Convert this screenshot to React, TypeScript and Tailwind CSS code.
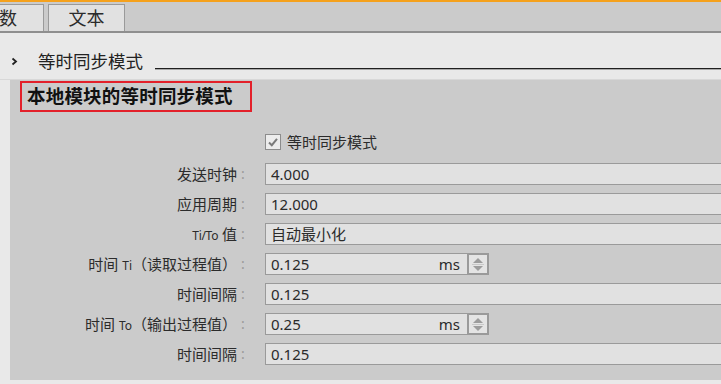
import React from "react";

type Row = { label: React.ReactNode; value: string; unit?: boolean };

const Lbl = ({ children }: { children: React.ReactNode }) => <>{children}</>;

const Spinner = () => (
  <div className="w-[22px] h-[22px] border-2 border-[#9a9a9a] bg-[#e4e4e4] flex flex-col items-center justify-center">
    <svg width="12" height="16" viewBox="0 0 12 16">
      <polygon points="6,2 11,7 1,7" fill="#9c9c9c" />
      <line x1="0" y1="8.5" x2="12" y2="8.5" stroke="#c8c8c8" strokeWidth="1" />
      <polygon points="1,10 11,10 6,15" fill="#9c9c9c" />
    </svg>
  </div>
);

export default function App() {
  const rows: Row[] = [
    { label: <Lbl>发送时钟</Lbl>, value: "4.000" },
    { label: <Lbl>应用周期</Lbl>, value: "12.000" },
    {
      label: (
        <>
          <span className="text-[12px] tracking-[-0.3px]">Ti/To</span> 值
        </>
      ),
      value: "自动最小化",
    },
    {
      label: (
        <>
          时间 <span className="text-[12px]">Ti</span>（读取过程值）
        </>
      ),
      value: "0.125",
      unit: true,
    },
    { label: <Lbl>时间间隔</Lbl>, value: "0.125" },
    {
      label: (
        <>
          时间 <span className="text-[12px]">To</span>（输出过程值）
        </>
      ),
      value: "0.25",
      unit: true,
    },
    { label: <Lbl>时间间隔</Lbl>, value: "0.125" },
  ];

  return (
    <div className="w-[721px] h-[384px] overflow-hidden bg-[#e9e9e9] text-[#2b2b2b] font-['Noto_Sans','Noto_Sans_CJK_SC',sans-serif]">
      <div className="h-[2px] bg-[#f5a11c]" />
      <div className="h-[31px] bg-[#cbcbcb] border-b-2 border-[#8f8f8f] flex items-end gap-[4px]">
        <div className="w-[44px] h-[27px] bg-[#e1e1e1] border border-b-0 border-[#9a9a9a] border-l-0 flex items-center justify-end pr-[26px] text-[18px] leading-none">
          数
        </div>
        <div className="w-[77px] h-[27px] bg-[#e1e1e1] border border-b-0 border-[#9a9a9a] flex items-center justify-center text-[18px] leading-none">
          文本
        </div>
      </div>
      <div className="h-[46px] pt-[16px] flex items-start">
        <div className="w-[38px] h-[24px] flex items-center pl-[11px]">
          <svg width="7" height="9" viewBox="0 0 7 9">
            <polyline points="1.5,1.5 5,4.5 1.5,7.5" fill="none" stroke="#222" strokeWidth="1.8" />
          </svg>
        </div>
        <div className="h-[24px] leading-[24px] text-[17.5px] text-[#222]">等时同步模式</div>
        <div className="flex-1 ml-[12px] mt-[19px] h-[2px] border-t border-b border-t-[#1f1f1f] border-b-[#a8a8a8]" />
      </div>
      <div className="h-[1px] bg-[#d8d8d8]" />
      <div className="ml-[10px] h-[300px] bg-[#cbcbcb] pt-[1px]">
        <div className="ml-[10px] w-[232px] h-[31px] border-2 border-[#e3202a] flex items-center pl-[5px]">
          <span className="text-[18.5px] font-bold text-[#111] leading-none tracking-[0.2px]">本地模块的等时同步模式</span>
        </div>
        <div className="mt-[15px] h-[30px] flex items-center pl-[255px]">
          <div className="w-[16px] h-[16px] border border-[#8c8c8c] bg-[#ececec] flex items-center justify-center">
            <svg width="12" height="12" viewBox="0 0 12 12">
              <polyline points="2,6.5 4.8,9.2 10,2.8" fill="none" stroke="#7a7a7a" strokeWidth="2" />
            </svg>
          </div>
          <span className="ml-[6px] text-[15px] text-[#2b2b2b]">等时同步模式</span>
        </div>
        <div className="mt-[2px] flex flex-col">
          {rows.map((r, i) => (
            <div key={i} className="h-[30px] flex items-center">
              <div className="w-[227px] text-right text-[15px] leading-none whitespace-nowrap text-[#2b2b2b]">{r.label}</div>
              <div className="w-[12px] text-center text-[14px] text-[#9a9a9a] leading-none">:</div>
              {r.unit ? (
                <div className="ml-[16px] w-[224px] h-[22px] flex">
                  <div className="flex-1 h-[22px] bg-[#e1e1e1] border border-[#9a9a9a] border-r-0 flex items-center justify-between pl-[5px] pr-[7px] text-[15px] leading-none">
                    <span>{r.value}</span>
                    <span>ms</span>
                  </div>
                  <Spinner />
                </div>
              ) : (
                <div className="ml-[16px] flex-1 h-[22px] bg-[#e1e1e1] border border-r-0 border-[#9a9a9a] flex items-center pl-[5px] text-[15px] leading-none">
                  {r.value}
                </div>
              )}
            </div>
          ))}
        </div>
      </div>
    </div>
  );
}
